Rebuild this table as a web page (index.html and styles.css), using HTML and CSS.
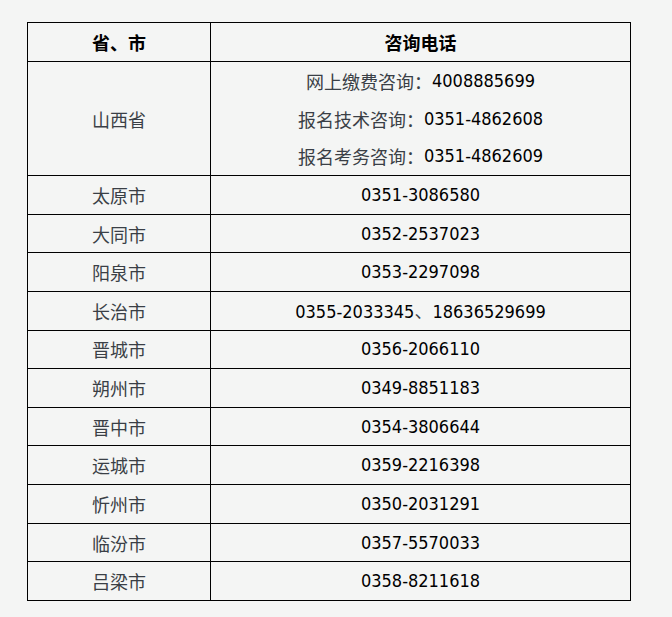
FILE: index.html
```html
<!DOCTYPE html>
<html lang="zh-CN">
<head>
<meta charset="utf-8">
<title>咨询电话</title>
<link rel="stylesheet" href="styles.css">
</head>
<body>
<table class="phones">
  <thead>
    <tr><th class="col-city">省、市</th><th>咨询电话</th></tr>
  </thead>
  <tbody>
    <tr>
      <td class="city">山西省</td>
      <td class="num multi">
        <div class="line"><span class="zh">网上缴费咨询：</span>4008885699</div>
        <div class="line"><span class="zh">报名技术咨询：</span>0351-4862608</div>
        <div class="line"><span class="zh">报名考务咨询：</span>0351-4862609</div>
      </td>
    </tr>
    <tr><td class="city">太原市</td><td class="num">0351-3086580</td></tr>
    <tr><td class="city">大同市</td><td class="num">0352-2537023</td></tr>
    <tr><td class="city">阳泉市</td><td class="num">0353-2297098</td></tr>
    <tr><td class="city">长治市</td><td class="num">0355-2033345<span class="zh">、</span>18636529699</td></tr>
    <tr><td class="city">晋城市</td><td class="num">0356-2066110</td></tr>
    <tr><td class="city">朔州市</td><td class="num">0349-8851183</td></tr>
    <tr><td class="city">晋中市</td><td class="num">0354-3806644</td></tr>
    <tr><td class="city">运城市</td><td class="num">0359-2216398</td></tr>
    <tr><td class="city">忻州市</td><td class="num">0350-2031291</td></tr>
    <tr><td class="city">临汾市</td><td class="num">0357-5570033</td></tr>
    <tr><td class="city">吕梁市</td><td class="num">0358-8211618</td></tr>
  </tbody>
</table>
</body>
</html>
```
FILE: styles.css
```css
html, body {
  margin: 0;
  padding: 0;
  background: #f4f5f4;
}
body {
  padding: 22px 0 0 27px;
  font-family: "Noto Sans CJK SC", sans-serif;
}
.phones {
  border-collapse: collapse;
  width: 604px;
  table-layout: fixed;
}
.phones th, .phones td {
  border: 1px solid #000;
  padding: 0;
  text-align: center;
  vertical-align: middle;
  font-size: 18px;
  line-height: 24px;
  height: 37.64px;
}
.phones th {
  font-weight: bold;
  color: #000;
  font-family: "Noto Sans CJK SC", sans-serif;
  height: 38px;
}
.col-city {
  width: 182px;
}
.city {
  color: #3a3f46;
  font-family: "Noto Sans CJK SC", sans-serif;
}
.num {
  color: #000;
  font-family: "DejaVu Sans Condensed", "DejaVu Sans", "Noto Sans CJK SC", sans-serif;
  font-stretch: condensed;
}
.zh {
  font-family: "Noto Sans CJK SC", sans-serif;
  color: #3a3f46;
  font-stretch: normal;
}
.multi {
  padding: 0;
}
.line {
  display: flex;
  align-items: center;
  justify-content: center;
  height: 37.7px;
}
```
